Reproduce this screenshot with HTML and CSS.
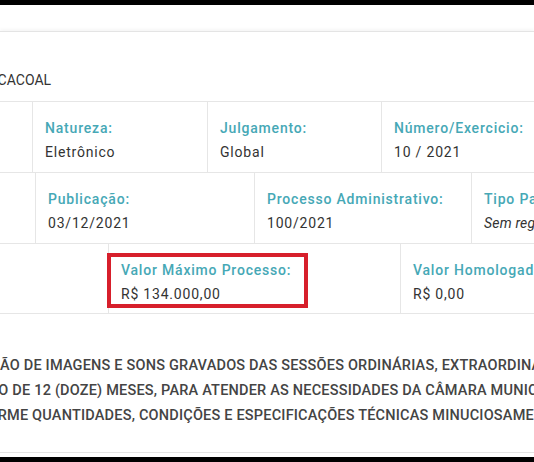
FILE: index.html
```html
<!DOCTYPE html>
<html lang="pt-BR">
<head>
<meta charset="utf-8">
<title>Processo</title>
<link rel="stylesheet" href="styles.css">
</head>
<body>
<div class="topbar"></div>
<div class="spacer"></div>
<main class="card">
  <div class="card-head">
    <p class="org">CÂMARA MUNICIPAL DE CACOAL</p>
  </div>

  <div class="row row-1">
    <div class="cell"><span class="label">Modalidade:</span><span class="value">Pregão</span></div>
    <div class="cell"><span class="label">Natureza:</span><span class="value">Eletrônico</span></div>
    <div class="cell"><span class="label">Julgamento:</span><span class="value">Global</span></div>
    <div class="cell"><span class="label">Número/Exercicio:</span><span class="value">10 / 2021</span></div>
  </div>

  <div class="row row-2">
    <div class="cell"><span class="label">Abertura:</span><span class="value">15/12</span></div>
    <div class="cell"><span class="label">Publicação:</span><span class="value">03/12/2021</span></div>
    <div class="cell"><span class="label">Processo Administrativo:</span><span class="value">100/2021</span></div>
    <div class="cell"><span class="label">Tipo Participação:</span><span class="value italic">Sem registro</span></div>
  </div>

  <div class="row row-3">
    <div class="cell"><span class="label">Situação:</span><span class="value">Aberta</span></div>
    <div class="cell highlight"><span class="label">Valor Máximo Processo:</span><span class="value">R$ 134.000,00</span><span class="mark"></span></div>
    <div class="cell"><span class="label">Valor Homologado:</span><span class="value">R$ 0,00</span></div>
  </div>

  <div class="object">
    <span class="line l1">EDIÇÃO DE IMAGENS E SONS GRAVADOS DAS SESSÕES ORDINÁRIAS, EXTRAORDINÁRIAS</span>
    <span class="line l2">PERÍODO DE 12 (DOZE) MESES, PARA ATENDER AS NECESSIDADES DA CÂMARA MUNICIPAL</span>
    <span class="line l3">CONFORME QUANTIDADES, CONDIÇÕES E ESPECIFICAÇÕES TÉCNICAS MINUCIOSAMENTE</span>
  </div>
</main>
<div class="gap"></div>
<div class="bottombar"></div>
</body>
</html>
```
FILE: styles.css
```css
* { box-sizing: border-box; }
html, body {
  margin: 0;
  padding: 0;
  background: #fff;
  overflow: hidden;
  width: 534px;
  height: 462px;
}
body {
  font-family: Roboto, "Liberation Sans", sans-serif;
  font-size: 14px;
  color: #333;
}
.topbar { height: 5px; background: #000; }
.spacer { height: 26px; }
.card {
  border-top: 1px solid #e4e4e4;
  border-bottom: 1px solid #e4e4e4;
  box-shadow: 0 -2px 3px rgba(0,0,0,0.04);
}
.card-head {
  height: 70px;
  padding-top: 36px;
  border-bottom: 1px solid #e6e6e6;
  overflow: hidden;
}
.org {
  margin: 0 0 0 -160px;
  line-height: 24px;
  white-space: nowrap;
  color: #333;
}
.row {
  display: grid;
  border-bottom: 1px solid #e6e6e6;
  height: 71px;
}
.row-1 { grid-template-columns: 175px 175px 174px 175px; margin-left: -142px; }
.row-2 { grid-template-columns: 220px 219px 217px 217px; margin-left: -184px; }
.row-3 { grid-template-columns: 293px 292px 292px; margin-left: -184px; height: 70px; }
.cell {
  position: relative;
  display: flex;
  flex-direction: column;
  padding: 14px 12px 8px 12px;
  border-right: 1px solid #e6e6e6;
  white-space: nowrap;
}
.label {
  line-height: 24px;
  color: #46a8b6;
  font-weight: 500;
  letter-spacing: 0.8px;
}
.value {
  line-height: 24px;
  color: #333;
  letter-spacing: 0.8px;
}
.italic { font-style: italic; letter-spacing: 0.2px; }
.mark {
  position: absolute;
  left: -2px;
  top: 9px;
  width: 201px;
  height: 55px;
  border: 4px solid #d71f2b;
}
.object {
  height: 138px;
  padding-top: 39px;
  display: flex;
  flex-direction: column;
  overflow: hidden;
}
.line {
  display: block;
  line-height: 25px;
  white-space: nowrap;
  color: #444;
  font-size: 14.5px;
  font-weight: 500;
  letter-spacing: 0.2px;
}
.l1 { margin-left: -32px; }
.l2 { margin-left: -53px; }
.l3 { margin-left: -51px; }
.gap { height: 4px; }
.bottombar { height: 6px; background: #000; }
```
